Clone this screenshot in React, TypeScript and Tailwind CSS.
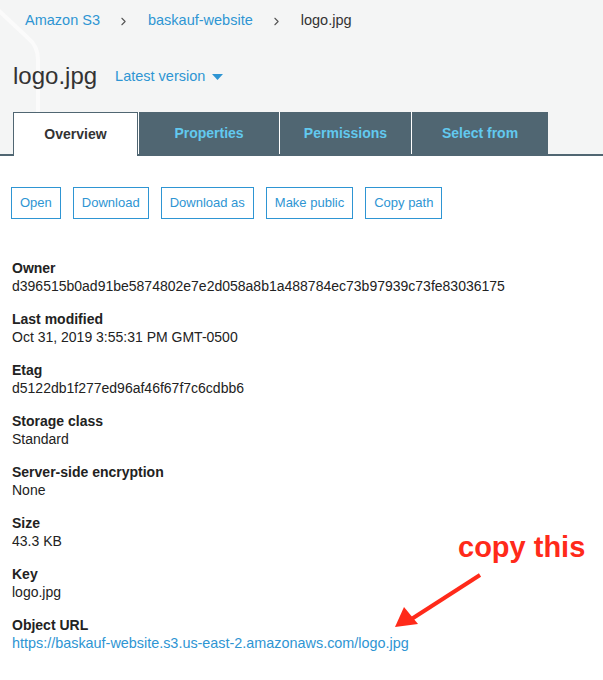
import { ChevronRight } from "lucide-react";

const fields = [
  { label: "Owner", value: "d396515b0ad91be5874802e7e2d058a8b1a488784ec73b97939c73fe83036175" },
  { label: "Last modified", value: "Oct 31, 2019 3:55:31 PM GMT-0500" },
  { label: "Etag", value: "d5122db1f277ed96af46f67f7c6cdbb6" },
  { label: "Storage class", value: "Standard" },
  { label: "Server-side encryption", value: "None" },
  { label: "Size", value: "43.3 KB" },
  { label: "Key", value: "logo.jpg" },
];

const tabs = ["Properties", "Permissions", "Select from"];
const tabWidths = ["w-[141px]", "w-[132px]", "w-[137px]"];
const actions = ["Open", "Download", "Download as", "Make public", "Copy path"];

export default function App() {
  return (
    <div className="relative min-h-[680px] w-[603px] overflow-hidden bg-white font-['Liberation_Sans',Arial,sans-serif] text-[#222]">
      {/* header band */}
      <div className="relative bg-[#f4f5f5]">
        <svg className="absolute left-0 top-0" width="60" height="156" viewBox="0 0 60 156" fill="none">
          <path d="M-4 8 L28 38 Q38 46 38 60 L38 156" stroke="#fbfbfb" strokeWidth="4" />
        </svg>

        <nav className="relative flex h-[42px] items-center pl-[25px] text-[14.5px]">
          <span className="text-[#2e95d3]">Amazon S3</span>
          <ChevronRight className="ml-[17px] mr-[18px] h-[13px] w-[13px] text-[#555]" strokeWidth={2} />
          <span className="text-[#2e95d3]">baskauf-website</span>
          <ChevronRight className="ml-[17px] mr-[18px] h-[13px] w-[13px] text-[#555]" strokeWidth={2} />
          <span className="text-[#333]">logo.jpg</span>
        </nav>

        <div className="relative flex h-[70px] items-center pl-[13px] pb-[2px]">
          <h1 className="text-[24px] text-[#333]">logo.jpg</h1>
          <span className="ml-[18px] mt-[2px] text-[14.5px] text-[#2e95d3]">Latest version</span>
          <svg className="ml-[7px] mt-[3px]" width="11" height="7" viewBox="0 0 11 7">
            <path d="M0 0 H11 L5.5 6 Z" fill="#2e95d3" />
          </svg>
        </div>

        <div className="relative flex h-[44px] border-b-2 border-[#506672] pl-[13px]">
          <div className="-mb-[2px] flex w-[125px] items-center justify-center border border-b-0 border-[#506672] bg-white text-[14px] font-bold text-[#333]">
            Overview
          </div>
          {tabs.map((t, i) => (
            <div
              key={t}
              className={`flex ${tabWidths[i]} items-center justify-center border-l border-white bg-[#506672] text-[14px] font-bold text-[#62c9ef]`}
            >
              {t}
            </div>
          ))}
        </div>
      </div>

      {/* actions */}
      <div className="flex gap-[12px] px-[11px] pt-[31px]">
        {actions.map((a) => (
          <button
            key={a}
            className="h-[32px] border border-[#2e95d3] px-[8px] text-[13px] text-[#2e95d3]"
          >
            {a}
          </button>
        ))}
      </div>

      {/* properties */}
      <div className="flex flex-col gap-[15px] px-[12px] pt-[40px] text-[14px] leading-[18px]">
        {fields.map((f) => (
          <div key={f.label}>
            <div className="font-bold">{f.label}</div>
            <div>{f.value}</div>
          </div>
        ))}
        <div>
          <div className="font-bold">Object URL</div>
          <div className="text-[14.4px] text-[#2e95d3]">https://baskauf-website.s3.us-east-2.amazonaws.com/logo.jpg</div>
        </div>
      </div>

      {/* annotation */}
      <div className="absolute left-[458px] top-[533px] text-[29px] font-bold leading-none text-[#ff2a1a]">
        copy this
      </div>
      <svg className="absolute left-[390px] top-[570px]" width="100" height="64" viewBox="0 0 100 64">
        <line x1="90" y1="5" x2="20" y2="50" stroke="#ff2a1a" strokeWidth="4" />
        <path d="M5 57 L14 37 L28 54 Z" fill="#ff2a1a" />
      </svg>
    </div>
  );
}
